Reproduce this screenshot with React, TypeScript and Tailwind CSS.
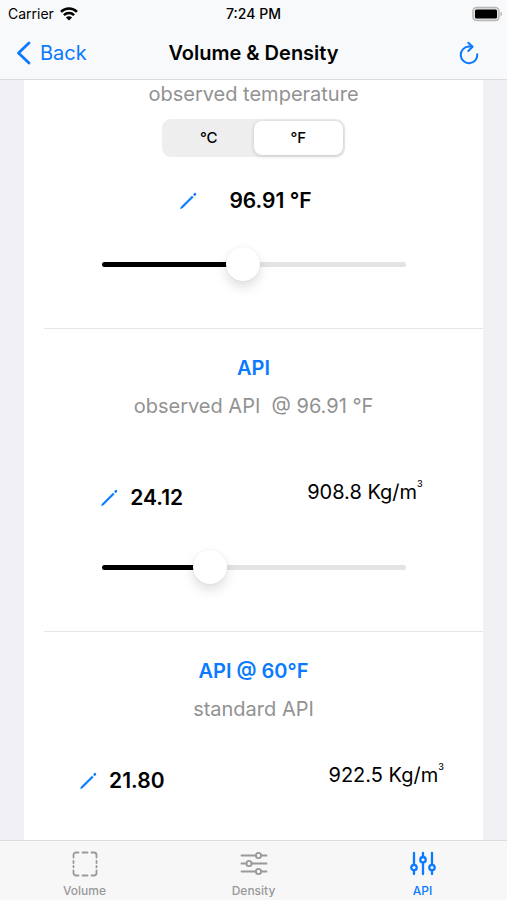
import { useState } from 'react';
import type { ReactNode } from 'react';

type Unit = 'C' | 'F';

function WifiIcon() {
  return (
    <svg width="18" height="14" viewBox="0 0 18 14" fill="none" stroke="currentColor" strokeWidth="2.5" aria-hidden="true">
      <path d="M1 4.9C5.5.4 12.5.4 17 4.9" />
      <path d="M3.9 8.2C6.8 5.4 11.2 5.4 14.1 8.2" />
      <path d="M9 13.5 5.9 10.4C7.7 8.7 10.3 8.7 12.1 10.4Z" fill="currentColor" stroke="none" />
    </svg>
  );
}

function BatteryIcon() {
  return (
    <svg width="31" height="16" viewBox="0 0 31 16" aria-hidden="true">
      <rect x="1" y="1.5" width="26" height="13" rx="3.5" fill="#e4e4e4" stroke="#b8b8b8" strokeWidth="1.5" />
      <rect x="3" y="3.5" width="22" height="9" rx="1.5" fill="#000" />
      <path d="M28.5 5.5v5c2-.8 2-4.2 0-5Z" fill="#b8b8b8" />
    </svg>
  );
}

function ReloadIcon() {
  return (
    <svg width="20" height="24" viewBox="0 0 20 24" fill="none" stroke="currentColor" strokeWidth="2" strokeLinecap="round" strokeLinejoin="round" aria-hidden="true">
      <path d="M18.3 13.2A8.3 8.3 0 1 1 10 5.6h3.3" />
      <path d="M9.3 1.7 13.5 5.8 9.3 10" />
    </svg>
  );
}

function PencilIcon() {
  return (
    <svg width="18" height="18" viewBox="0 0 18 18" fill="none" stroke="#0a7aff" aria-hidden="true">
      <path d="M1.5 16.7 2.2 14.7 13 3.9 14.3 5.200 3.500 16Z" fill="#0a7aff" strokeWidth=".5" strokeLinejoin="round" />
      <path d="M15.6 2.600 16 2.200" strokeWidth="2.500" strokeLinecap="round" />
    </svg>
  );
}

function VolumeIcon() {
  return (
    <svg width="26" height="26" viewBox="0 0 26 26" fill="none" stroke="currentColor" strokeWidth="1.8" strokeLinecap="round" aria-hidden="true">
      <path d="M1.5 6.5V4A2.5 2.5 0 0 1 4 1.5h2.5M19.5 1.5H22A2.5 2.5 0 0 1 24.5 4v2.5M24.5 19.5V22a2.5 2.5 0 0 1-2.5 2.5h-2.5M6.5 24.5H4A2.5 2.5 0 0 1 1.5 22v-2.5" />
      <path d="M10.500 1.500h5M10.500 24.500h5M1.500 10v2M1.500 14.800v1.500M24.500 10v2M24.500 14.800v1.500" />
    </svg>
  );
}

function DensityIcon() {
  return (
    <svg width="28" height="26" viewBox="0 0 28 26" fill="none" stroke="currentColor" strokeWidth="1.8" strokeLinecap="round" aria-hidden="true">
      <path d="M1.5 4.5h14.5M21 4.5h5.5M1.5 12.5h5M11.5 12.5h15M1.5 20.5h14.5M21 20.5h5.5" />
      <circle cx="18.5" cy="4.5" r="2.6" />
      <circle cx="9" cy="12.5" r="2.6" />
      <circle cx="18.5" cy="20.5" r="2.6" />
    </svg>
  );
}

function ApiIcon() {
  return (
    <svg width="26" height="26" viewBox="0 0 26 26" fill="none" stroke="currentColor" strokeWidth="2.3" strokeLinecap="round" aria-hidden="true">
      <path d="M4 2v11.5M4 19.5V23M13 2v4M13 11.5V23M22 2v11.5M22 19.5V23" />
      <circle cx="4" cy="16.5" r="2.7" />
      <circle cx="13" cy="8.7" r="2.7" />
      <circle cx="22" cy="16.5" r="2.7" />
    </svg>
  );
}

interface SliderProps {
  label: string;
  value: number;
  onChange: (value: number) => void;
}

function Slider({ label, value, onChange }: SliderProps) {
  return (
    <div className="relative mx-auto flex h-9 w-[304px] items-center">
      <div className="h-[5px] w-full overflow-hidden rounded-full bg-[#e3e3e4]">
        <div className="h-full bg-black" style={{ width: `${value}%` }} />
      </div>
      <input
        type="range"
        aria-label={label}
        value={value}
        onChange={e => onChange(Number(e.target.value))}
        className="absolute inset-0 w-full appearance-none bg-transparent [&::-webkit-slider-thumb]:size-[34px] [&::-webkit-slider-thumb]:appearance-none [&::-webkit-slider-thumb]:rounded-full [&::-webkit-slider-thumb]:bg-white [&::-webkit-slider-thumb]:shadow-[0_6px_12px_rgba(0,0,0,0.13),0_0_2px_rgba(0,0,0,0.08)]"
      />
    </div>
  );
}

function Reading({ label, children }: { label: string; children: ReactNode }) {
  return (
    <div className="flex items-center gap-3">
      <button aria-label={`Edit ${label}`}>
        <PencilIcon />
      </button>
      <span className="text-[21px] leading-7 font-semibold">{children}</span>
    </div>
  );
}

function Density({ value }: { value: string }) {
  return (
    <span className="flex items-start text-xl leading-7">
      {value} Kg/m
      <sup className="top-0 text-[9px] leading-3 font-medium">3</sup>
    </span>
  );
}

const tabs = [
  { name: 'Volume', icon: VolumeIcon },
  { name: 'Density', icon: DensityIcon },
  { name: 'API', icon: ApiIcon },
];

export default function App() {
  const [unit, setUnit] = useState<Unit>('F');
  const [temperature, setTemperature] = useState(46);
  const [api, setApi] = useState(34);
  const [tab, setTab] = useState('API');

  return (
    <div className="flex h-screen flex-col overflow-hidden bg-[#f0f0f5] font-[Inter,sans-serif] text-black">
      <header className="border-b border-[#dcdcde] bg-[#f8f9fa]">
        <div className="grid h-7 grid-cols-3 items-center px-2 text-sm">
          <div className="flex items-center gap-1.5">
            Carrier
            <WifiIcon />
          </div>
          <time className="text-center font-medium">7:24 PM</time>
          <div className="-mr-1 flex justify-end">
            <BatteryIcon />
          </div>
        </div>
        <nav className="grid h-[51px] grid-cols-[1fr_auto_1fr] items-center px-4 pb-0.5">
          <a href="#back" className="flex items-center gap-2 text-xl text-[#0a7aff]">
            <svg width="16" height="24" viewBox="0 0 16 24" fill="none" stroke="currentColor" strokeWidth="2.8" strokeLinecap="round" strokeLinejoin="round" aria-hidden="true">
              <path d="M13 2 2.5 12 13 22" />
            </svg>
            Back
          </a>
          <h1 className="text-xl font-semibold">Volume &amp; Density</h1>
          <button aria-label="Reset" className="mr-3 justify-self-end text-[#0a7aff]">
            <ReloadIcon />
          </button>
        </nav>
      </header>

      <main className="mx-6 min-h-0 flex-1 overflow-hidden bg-white">
        <section className="flex flex-col">
          <p className="text-center text-xl leading-7 text-[#929292]">observed temperature</p>
          <div className="mx-auto mt-[11px] grid h-[38px] w-[183px] grid-cols-2 rounded-[9px] bg-[#eeeeef] p-0.5">
            {(['C', 'F'] as Unit[]).map(u => (
              <button
                key={u}
                onClick={() => setUnit(u)}
                className={`rounded-lg text-[15px] font-medium ${unit === u ? 'bg-white shadow-[0_1px_4px_rgba(0,0,0,0.18)]' : ''}`}
              >
                °{u}
              </button>
            ))}
          </div>
          <div className="mt-[30px] flex justify-center pr-4">
            <Reading label="temperature">
              <span className="pl-5">96.91 °F</span>
            </Reading>
          </div>
          <div className="mt-[31px]">
            <Slider label="Observed temperature" value={temperature} onChange={setTemperature} />
          </div>
        </section>

        <section className="mt-[46px] ml-5 border-t border-[#e6e6e7]">
          <div className="-ml-5 pt-[23px] text-center text-xl">
            <h2 className="leading-8 font-semibold text-[#0a7aff]">API</h2>
            <p className="mt-1 leading-9 whitespace-pre text-[#929292]">observed API  @ 96.91 °F</p>
          </div>
          <div className="-ml-5 flex items-center justify-center gap-[124px] pt-[54px] pl-4">
            <Reading label="API">24.12</Reading>
            <div className="pb-3">
              <Density value="908.8" />
            </div>
          </div>
          <div className="-ml-5 pt-[31px]">
            <Slider label="Observed API" value={api} onChange={setApi} />
          </div>
        </section>

        <section className="mt-[46px] ml-5 border-t border-[#e6e6e7]">
          <div className="-ml-5 pt-[23px] text-center text-xl">
            <h2 className="leading-8 font-semibold text-[#0a7aff]">API @ 60°F</h2>
            <p className="mt-1 leading-9 text-[#929292]">standard API</p>
          </div>
          <div className="-ml-5 flex items-center justify-center gap-[164px] pt-[34px] pl-4">
            <Reading label="standard API">21.80</Reading>
            <div className="pb-3">
              <Density value="922.5" />
            </div>
          </div>
        </section>
      </main>

      <nav className="grid h-[60px] shrink-0 grid-cols-3 border-t border-[#dcdcde] bg-[#f7f7f8]">
        {tabs.map(({ name, icon: Icon }) => (
          <button
            key={name}
            onClick={() => setTab(name)}
            className={`flex flex-col items-center gap-1 pt-2.5 text-xs leading-5 font-medium ${tab === name ? 'text-[#0a7aff]' : 'text-[#999]'}`}
          >
            <Icon />
            {name}
          </button>
        ))}
      </nav>
    </div>
  );
}
